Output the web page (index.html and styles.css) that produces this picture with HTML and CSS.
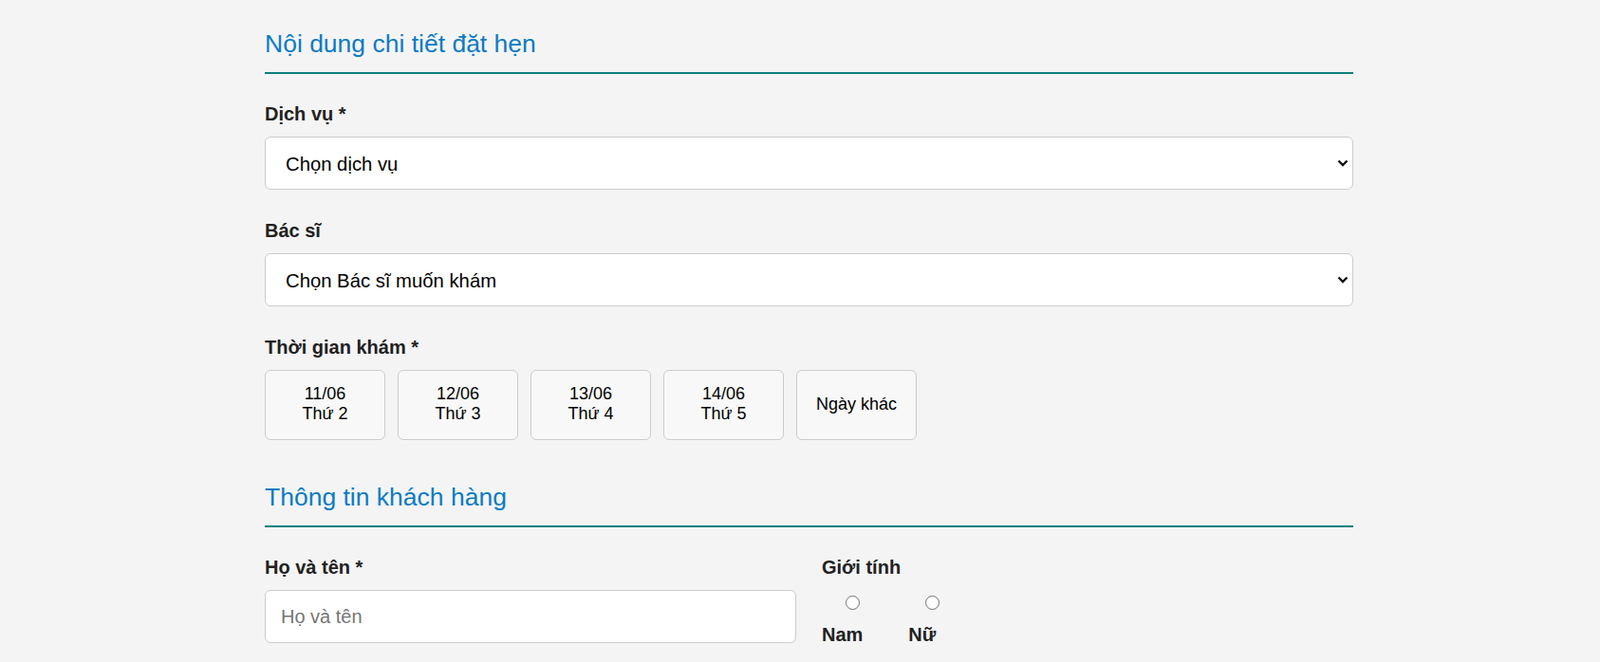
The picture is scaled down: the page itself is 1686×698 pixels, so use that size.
FILE: index.html
```html
<!DOCTYPE html>
<html lang="vi">
<head>
<meta charset="utf-8">
<title>Đặt hẹn</title>
<link rel="stylesheet" href="styles.css">
</head>
<body>
<div class="container">
  <h2 class="section-title">Nội dung chi tiết đặt hẹn</h2>

  <div class="form-group">
    <div class="label">Dịch vụ *</div>
    <div class="select">
      <span>Chọn dịch vụ</span>
      <svg class="chev" width="12" height="8" viewBox="0 0 12 8"><path d="M1.5 1.5 L6 6 L10.5 1.5" fill="none" stroke="#111" stroke-width="2.4"/></svg>
    </div>
  </div>

  <div class="form-group">
    <div class="label">Bác sĩ</div>
    <div class="select">
      <span>Chọn Bác sĩ muốn khám</span>
      <svg class="chev" width="12" height="8" viewBox="0 0 12 8"><path d="M1.5 1.5 L6 6 L10.5 1.5" fill="none" stroke="#111" stroke-width="2.4"/></svg>
    </div>
  </div>

  <div class="form-group last">
    <div class="label">Thời gian khám *</div>
    <div class="dates">
      <div class="date">11/06<br>Thứ 2</div>
      <div class="date">12/06<br>Thứ 3</div>
      <div class="date">13/06<br>Thứ 4</div>
      <div class="date">14/06<br>Thứ 5</div>
      <div class="date">Ngày khác</div>
    </div>
  </div>

  <h2 class="section-title">Thông tin khách hàng</h2>

  <div class="row">
    <div class="form-group">
      <div class="label">Họ và tên *</div>
      <input class="input" type="text" placeholder="Họ và tên">
    </div>
    <div class="form-group">
      <div class="label">Giới tính</div>
      <div class="radios">
        <label class="radio"><input type="radio" name="g"><span>Nam</span></label>
        <label class="radio"><input type="radio" name="g"><span>Nữ</span></label>
      </div>
    </div>
  </div>
</div>
</body>
</html>
```

FILE: styles.css
```css
* { box-sizing: border-box; }

body {
  margin: 0;
  background: #f4f4f4;
  font-family: "Liberation Sans", Arial, sans-serif;
  color: #222;
}

.container {
  width: 1147px;
  margin-left: 279px;
  padding-top: 31px;
}

.section-title {
  margin: 0 0 31px;
  padding-bottom: 15px;
  font-size: 26.5px;
  line-height: 30px;
  font-weight: normal;
  color: #0b7bc4;
  border-bottom: 2px solid #0b7f80;
}

.form-group {
  margin-bottom: 32px;
}

.form-group.last {
  margin-bottom: 45px;
}

.label {
  font-size: 20px;
  line-height: 22px;
  font-weight: bold;
  color: #212121;
  margin-bottom: 13px;
}

.select {
  height: 56px;
  background: #fff;
  border: 1px solid #ccc;
  border-radius: 6px;
  display: flex;
  align-items: center;
  justify-content: space-between;
  padding: 2px 4px 0 21px;
  font-size: 20.3px;
  line-height: 24px;
  color: #000;
}

.chev { display: block; margin-top: -2px; }

.dates {
  display: flex;
  gap: 13px;
}

.date {
  width: 127px;
  height: 74px;
  background: #f8f8f8;
  border: 1px solid #ccc;
  border-radius: 6px;
  display: flex;
  align-items: center;
  justify-content: center;
  padding-bottom: 2px;
  text-align: center;
  font-size: 18px;
  line-height: 21px;
  color: #000;
}

.row {
  display: grid;
  grid-template-columns: 560px 1fr;
  column-gap: 27px;
}

.input {
  display: block;
  width: 100%;
  height: 56px;
  background: #fff;
  border: 1px solid #ccc;
  border-radius: 6px;
  padding: 1px 16px 0;
  font-family: "Liberation Sans", Arial, sans-serif;
  font-size: 20px;
  color: #000;
  outline: none;
}

.input::placeholder { color: #757575; }

.radios {
  display: flex;
  gap: 27px;
  padding-top: 6px;
}

.radio {
  display: flex;
  flex-direction: column;
  align-items: center;
}

.radio input {
  appearance: none;
  -webkit-appearance: none;
  width: 15px;
  height: 15px;
  margin: 0 0 15px;
  border: 1px solid #6f6f6f;
  border-radius: 50%;
  background: #fff;
}

.radio span {
  display: block;
  padding-right: 21px;
  font-size: 20px;
  line-height: 22px;
  font-weight: bold;
  color: #212121;
}
```
